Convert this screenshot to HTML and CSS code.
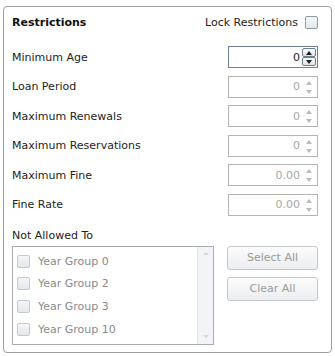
FILE: index.html
```html
<!DOCTYPE html>
<html lang="en">
    <head>
        <meta charset="UTF-8">
        <title>Restrictions</title>
        <link rel="stylesheet" href="styles.css">
    </head>
    <body>
        <div id="restrictions">
            <div class="header">
                <span class="title">Restrictions</span>
                <label class="lock">Lock Restrictions <span class="check"></span></label>
            </div>

            <div class="row">
                <span class="label">Minimum Age</span>
                <div class="spin focused"><span class="value">0</span><span class="arrows"><span class="up"></span><span class="down"></span></span></div>
            </div>
            <div class="row">
                <span class="label">Loan Period</span>
                <div class="spin disabled"><span class="value">0</span><span class="arrows"><span class="up"></span><span class="down"></span></span></div>
            </div>
            <div class="row">
                <span class="label">Maximum Renewals</span>
                <div class="spin disabled"><span class="value">0</span><span class="arrows"><span class="up"></span><span class="down"></span></span></div>
            </div>
            <div class="row">
                <span class="label">Maximum Reservations</span>
                <div class="spin disabled"><span class="value">0</span><span class="arrows"><span class="up"></span><span class="down"></span></span></div>
            </div>
            <div class="row">
                <span class="label">Maximum Fine</span>
                <div class="spin disabled"><span class="value">0.00</span><span class="arrows"><span class="up"></span><span class="down"></span></span></div>
            </div>
            <div class="row">
                <span class="label">Fine Rate</span>
                <div class="spin disabled"><span class="value">0.00</span><span class="arrows"><span class="up"></span><span class="down"></span></span></div>
            </div>

            <div class="not-allowed">Not Allowed To</div>
            <div class="groups">
                <div class="list">
                    <div class="items">
                        <div class="item"><span class="check"></span>Year Group 0</div>
                        <div class="item"><span class="check"></span>Year Group 2</div>
                        <div class="item"><span class="check"></span>Year Group 3</div>
                        <div class="item"><span class="check"></span>Year Group 10</div>
                    </div>
                    <div class="scrollbar"><span class="up"></span><span class="down"></span></div>
                </div>
                <div class="buttons">
                    <button>Select All</button>
                    <button>Clear All</button>
                </div>
            </div>
        </div>
    </body>
</html>
```

FILE: styles.css
```css
body {
    margin: 0;
    padding: 0;
    background: #fff;
    font-family: "DejaVu Sans", Verdana, sans-serif;
    font-size: 11px;
    color: #222;
}

#restrictions {
    margin: 6px 3px 0 3px;
    width: 329px;
    height: 347px;
    box-sizing: border-box;
    border: 1px solid #a0a0a0;
    border-radius: 4px;
    padding: 7px 13px 0 8px;
}

.header {
    display: flex;
    justify-content: space-between;
    align-items: center;
    height: 16px;
    margin-bottom: 16px;
}

.title {
    font-weight: bold;
    color: #111;
}

.lock {
    display: flex;
    align-items: center;
    gap: 7px;
}

.check {
    display: inline-block;
    width: 11px;
    height: 11px;
    border: 1px solid #8e9aa6;
    border-radius: 2px;
    background: linear-gradient(#f4f6f8, #e4e8ec);
}

.row {
    display: flex;
    justify-content: space-between;
    align-items: center;
    height: 22px;
    margin-bottom: 7.6px;
}

.spin {
    width: 90px;
    height: 22px;
    box-sizing: border-box;
    border: 1px solid #b4b4b4;
    display: flex;
    justify-content: flex-end;
    align-items: center;
}

.spin.focused {
    border-color: #6c7f94;
}

.spin .value {
    margin-right: 2px;
}

.spin.disabled .value {
    color: #a8a8a8;
}

.arrows {
    display: flex;
    flex-direction: column;
    width: 14px;
    height: 18px;
    margin-right: 1px;
}

.arrows span {
    flex: 1;
    position: relative;
    border: 1px solid transparent;
    border-radius: 2px;
}

.focused .arrows span {
    border-color: #6c7f94;
    background: linear-gradient(#fafbfc, #dde3e8);
}

.arrows span::after {
    content: "";
    position: absolute;
    left: 3px;
    top: 2px;
    border-left: 3px solid transparent;
    border-right: 3px solid transparent;
}

.arrows .up::after {
    border-bottom: 4px solid #222;
}

.arrows .down::after {
    border-top: 4px solid #222;
}

.disabled .arrows .up::after {
    border-bottom-color: #bbb;
}

.disabled .arrows .down::after {
    border-top-color: #bbb;
}

.not-allowed {
    margin-top: 13px;
    margin-bottom: 4px;
}

.groups {
    display: flex;
    justify-content: space-between;
}

.list {
    width: 202px;
    height: 99px;
    box-sizing: border-box;
    border: 1px solid #a7acb2;
    display: flex;
    justify-content: space-between;
}

.items {
    padding: 3px 0 0 4px;
    color: #8a8a8a;
}

.item {
    display: flex;
    align-items: center;
    height: 22.6px;
    gap: 8px;
}

.item .check {
    border-color: #c4cad0;
}

.scrollbar {
    width: 15px;
    border-left: 1px solid #e2e6ea;
    background: #f2f4f7;
    display: flex;
    flex-direction: column;
    justify-content: space-between;
}

.scrollbar span {
    height: 14px;
    position: relative;
}

.scrollbar span::after {
    content: "";
    position: absolute;
    left: 5px;
    top: 5px;
    border-left: 3px solid transparent;
    border-right: 3px solid transparent;
}

.scrollbar .up::after {
    border-bottom: 3px solid #d4d8dc;
}

.scrollbar .down::after {
    border-top: 3px solid #d4d8dc;
}

.buttons {
    display: flex;
    flex-direction: column;
    gap: 7px;
}

button {
    width: 91px;
    height: 24px;
    font-family: inherit;
    font-size: 11px;
    color: #9a9a9a;
    border: 1px solid #c4c8cc;
    border-radius: 3px;
    background: linear-gradient(#fbfbfb, #eceef0);
}
```
